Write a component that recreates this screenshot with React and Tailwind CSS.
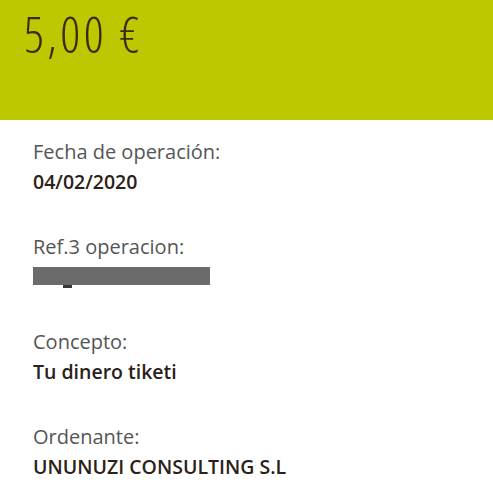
import React from "react";

const rows = [
  { label: "Fecha de operación:", value: "04/02/2020" },
  { label: "Ref.3 operacion:", redacted: true },
  { label: "Concepto:", value: "Tu dinero tiketi" },
  { label: "Ordenante:", value: "UNUNUZI CONSULTING S.L" },
];

export default function App() {
  return (
    <div className="min-h-[503px] w-[493px] bg-white" style={{ fontFamily: "'Open Sans', 'Noto Sans', sans-serif" }}>
      <div className="h-[120px] bg-[#bdc800] pl-[24px] pt-[6px]">
        <div className="text-[49px] font-light leading-[56px] tracking-[3.4px] text-[#3a2c14] [font-stretch:75%]">5,00 €</div>
      </div>

      <div className="flex flex-col gap-[35px] px-[33px] pt-[17px]">
        {rows.map((r) => (
          <div key={r.label} className="flex flex-col">
            <div className="text-[20px] leading-[30px] text-[#555555]">{r.label}</div>
            {r.redacted ? (
              <div className="h-[30px] pt-[5px]">
                <div className="h-[18px] w-[177px] bg-[#6b6b6b]" />
                <div className="ml-[30px] h-[3px] w-[9px] bg-[#3a3a3a]" />
              </div>
            ) : (
              <div className="text-[19.5px] font-semibold leading-[30px] text-[#2b2118]">{r.value}</div>
            )}
          </div>
        ))}
      </div>
    </div>
  );
}
